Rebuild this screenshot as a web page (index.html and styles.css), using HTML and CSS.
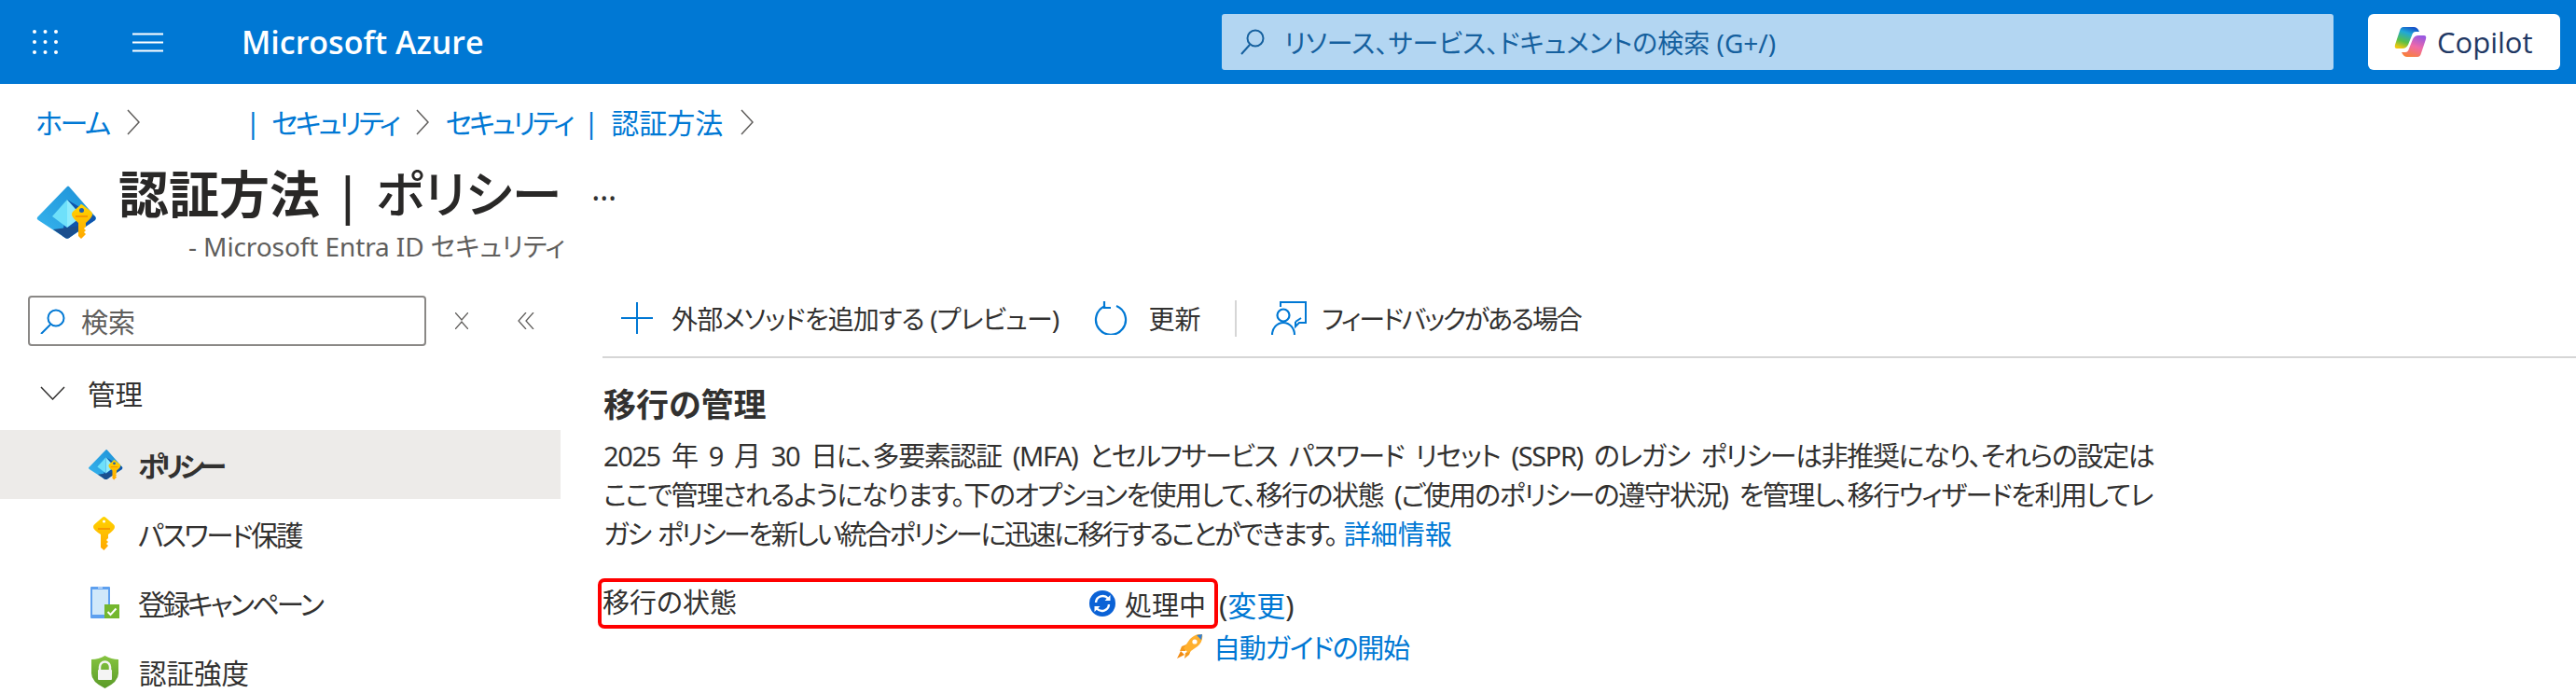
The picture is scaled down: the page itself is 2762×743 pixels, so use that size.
FILE: index.html
```html
<!DOCTYPE html>
<html lang="ja">
<head>
<meta charset="utf-8">
<title>認証方法 | ポリシー - Microsoft Azure</title>
<link rel="stylesheet" href="styles.css">
</head>
<body>
<svg class="defs" width="0" height="0" aria-hidden="true">
  <defs>
    <linearGradient id="entraL" x1="0" y1="1" x2="1" y2="0"><stop offset="0" stop-color="#37b5ee"/><stop offset="1" stop-color="#1c8fd6"/></linearGradient>
    <linearGradient id="keyG" x1="0" y1="0" x2="0" y2="1"><stop offset="0" stop-color="#ffd400"/><stop offset="1" stop-color="#ffa800"/></linearGradient>
    <linearGradient id="copL" x1="0.7" y1="0" x2="0.3" y2="1"><stop offset="0" stop-color="#1450c8"/><stop offset="0.3" stop-color="#20a8d8"/><stop offset="0.7" stop-color="#58c048"/><stop offset="1" stop-color="#f0c810"/></linearGradient>
    <linearGradient id="copR" x1="0.3" y1="1" x2="0.7" y2="0"><stop offset="0" stop-color="#9a58e0"/><stop offset="0.5" stop-color="#f06aa8"/><stop offset="1" stop-color="#f8803a"/></linearGradient>
    <linearGradient id="shieldG" x1="0" y1="0" x2="0" y2="1"><stop offset="0" stop-color="#86c440"/><stop offset="1" stop-color="#5a9a28"/></linearGradient>
    <symbol id="entra" viewBox="8 7 66 59">
      <path d="M42 9 10 42q-1 2 1 3l29 19q2 1 4 0l28-19q2-2 0-4L44 9q-1-1-2 0Z" fill="url(#entraL)"/>
      <path d="M42 23 72 41q1 2 0 4L44 64q-2 1-4 0l-3-2 5-39Z" fill="#0f55ad"/>
      <path d="M27 55 42 53 62 50 44 64q-2 1-4 0Z" fill="#1b4f8e"/>
      <path d="M42 23 26 41 42 53Z" fill="#6ee0fa"/>
      <path d="M42 23 58 41 42 53Z" fill="#8debfc"/>
      <path d="M57 28q1 0 2 1l9 7q1 1 1 3 0 3-7 9v4l-2 2 2 2-2 2 2 2-5 5-3-3V48q-7-6-7-9 0-2 1-3l8-7q0-1 1-1Z" fill="url(#keyG)"/>
      <circle cx="57.5" cy="34.500" r="2.500" fill="#1c5fb0"/>
      <path d="M51 40h13v2H51Z" fill="#f59a00"/>
    </symbol>
  </defs>
</svg>

<header class="topbar">
  <svg class="ico-grid" viewBox="0 0 27 26"><g fill="#fff"><circle cx="2" cy="2" r="2"/><circle cx="13.500" cy="2" r="2"/><circle cx="25" cy="2" r="2"/><circle cx="2" cy="13" r="2"/><circle cx="13.500" cy="13" r="2"/><circle cx="25" cy="13" r="2"/><circle cx="2" cy="24" r="2"/><circle cx="13.500" cy="24" r="2"/><circle cx="25" cy="24" r="2"/></g></svg>
  <svg class="ico-menu" viewBox="0 0 33 21"><path d="M0 1.500h33M0 10.500h33M0 19.500h33" stroke="#fff" stroke-width="2" fill="none"/></svg>
  <div class="brand">Microsoft Azure</div>
  <div class="globalsearch">
    <svg class="ico-gs" viewBox="0 0 26 28"><circle cx="16" cy="10" r="8.500" fill="none" stroke="#15609e" stroke-width="2"/><path d="M10 17 1 27" stroke="#15609e" stroke-width="2" fill="none"/></svg>
    <span>リソース、サービス、ドキュメントの検索 (G+/)</span>
  </div>
  <div class="copilot">
    <svg class="ico-cop" viewBox="0 0 35 32">
      <path d="M10 0H21Q25 0 27 5H23Q20 5 19 9L15 19Q13 23 9 23H3Q0 23 1 19L6 4Q7 0 10 0Z" fill="url(#copL)"/>
      <path d="M10 0H21Q25 0 27 5H23Q20 5 19 9L15 19Q13 23 9 23H3Q0 23 1 19L6 4Q7 0 10 0Z" fill="url(#copR)" transform="rotate(180 17.500 16)"/>
    </svg>
    <span>Copilot</span>
  </div>
</header>

<nav class="crumbs">
  <a class="link crumb-home">ホーム</a>
  <svg class="chev" viewBox="0 0 14 28"><path d="M1 1l12 13L1 27" fill="none" stroke="#605e5c" stroke-width="1.500"/></svg>
  <a class="link crumb-gap">| <span class="crumb-kana">セキュリティ</span></a>
  <svg class="chev" viewBox="0 0 14 28"><path d="M1 1l12 13L1 27" fill="none" stroke="#605e5c" stroke-width="1.500"/></svg>
  <a class="link crumb-last"><span class="crumb-kana">セキュリティ</span> | 認証方法</a>
  <svg class="chev" viewBox="0 0 14 28"><path d="M1 1l12 13L1 27" fill="none" stroke="#605e5c" stroke-width="1.500"/></svg>
</nav>

<section class="pagehead">
  <svg class="ico-title"><use href="#entra"/></svg>
  <div class="titles">
    <div class="titleline">
      <h1><b>認証方法</b> | ポリシー</h1>
      <span class="more">…</span>
    </div>
    <div class="subtitle">- Microsoft Entra ID セキュリティ</div>
  </div>
</section>

<div class="workspace">
  <aside class="sidebar">
    <div class="sidetools">
      <div class="sidesearch">
        <svg class="ico-ss" viewBox="0 0 27 27"><circle cx="17" cy="10" r="8.500" fill="none" stroke="#0078d4" stroke-width="2"/><path d="M11 17 1 27" stroke="#0078d4" stroke-width="2" fill="none"/></svg>
        <span>検索</span>
      </div>
      <svg class="ico-x" viewBox="0 0 14 18"><path d="M0 0l7 8 7-8M0 18l7-8 7 8" fill="none" stroke="#605e5c" stroke-width="1.300"/></svg>
      <svg class="ico-dbl" viewBox="0 0 18 18"><path d="M9 0 1 9l8 9M17 0 9 9l8 9" fill="none" stroke="#605e5c" stroke-width="1.300"/></svg>
    </div>
    <div class="navhead">
      <svg class="ico-down" viewBox="0 0 27 15"><path d="M1 1l12.500 13L26 1" fill="none" stroke="#323130" stroke-width="1.500"/></svg>
      <span>管理</span>
    </div>
    <ul class="nav">
      <li class="navitem selected">
        <span class="navico"><svg class="ico-nav-entra"><use href="#entra"/></svg></span>
        <span class="label-policy">ポリシー</span>
      </li>
      <li class="navitem">
        <span class="navico"><svg class="ico-key" viewBox="0 0 23 36"><path d="M11.500 0q1 0 2 1l8 7q1.500 1 1.500 3 0 3-7 8v4l-2 2 2 2-2 2 2 2-4.500 5L8 33V19q-8-5-8-8 0-2 1.500-3l8-7q1-1 2-1Z" fill="url(#keyG)"/><circle cx="11.500" cy="5" r="1.500" fill="#fff"/><path d="M5 12h13v2H5Z" fill="#f59a00"/></svg></span>
        <span class="label-pass">パスワード保護</span>
      </li>
      <li class="navitem">
        <span class="navico"><svg class="ico-phone" viewBox="0 0 31 34"><rect x="0" y="0" width="21" height="34" rx="1" fill="#5ea0ef"/><rect x="2" y="3" width="17" height="27" fill="#d0e8fa"/><path d="M8 1.200h5" stroke="#fff" stroke-width="1"/><rect x="15" y="19" width="16" height="15" fill="#74b72e"/><path d="M18.500 27l3 3 6-6.500" fill="none" stroke="#fff" stroke-width="2"/></svg></span>
        <span class="label-reg">登録キャンペーン</span>
      </li>
      <li class="navitem">
        <span class="navico"><svg class="ico-shield" viewBox="0 0 29 35"><path d="M14.500 0q7 4 14.500 4v15q0 9-14.500 16Q0 28 0 19V4q8 0 14.500-4Z" fill="url(#shieldG)"/><path d="M9 16v-4a5.500 5.500 0 0 1 11 0v4" fill="none" stroke="#f4f4f4" stroke-width="2.500"/><rect x="7" y="15" width="15" height="11" rx="1" fill="#f4f4f4"/></svg></span>
        <span class="label-str">認証強度</span>
      </li>
    </ul>
  </aside>

  <main class="content">
    <div class="toolbar">
      <div class="tool tool-add">
        <svg class="ico-plus" viewBox="0 0 34 34"><path d="M17 0v34M0 17h34" stroke="#0078d4" stroke-width="2" fill="none"/></svg>
        <span>外部メソッドを追加する (プレビュー)</span>
      </div>
      <div class="tool tool-refresh">
        <svg class="ico-refresh" viewBox="0 0 36 36"><path d="M12 5a16 16 0 1 0 12 0" fill="none" stroke="#0078d4" stroke-width="2.200"/><path d="M11 0v7h7" fill="none" stroke="#0078d4" stroke-width="2.200"/></svg>
        <span>更新</span>
      </div>
      <div class="toolsep"></div>
      <div class="tool tool-feedback">
        <svg class="ico-fb" viewBox="0 0 38 36"><path d="M10 6V1h27v22h-7l-4 4v-5" fill="none" stroke="#0078d4" stroke-width="2"/><path d="M26 22l6-4" stroke="#0078d4" stroke-width="2" fill="none"/><circle cx="13" cy="15" r="6.500" fill="none" stroke="#0078d4" stroke-width="2.200"/><path d="M1 36c0-7 5-13 12-13s12 6 12 13" fill="none" stroke="#0078d4" stroke-width="2.200"/></svg>
        <span>フィードバックがある場合</span>
      </div>
    </div>

    <article class="article">
      <h2>移行の管理</h2>
      <p class="lead">
        <span class="line line-a">2025 年 9 月 30 日に、多要素認証 (MFA) とセルフサービス パスワード リセット (SSPR) のレガシ ポリシーは非推奨になり、それらの設定は</span>
        <span class="line">ここで管理されるようになります。下のオプションを使用して、移行の状態 (ご使用のポリシーの遵守状況) を管理し、移行ウィザードを利用してレ</span>
        <span class="line line-c">ガシ ポリシーを新しい統合ポリシーに迅速に移行することができます。 <a class="link more-link">詳細情報</a></span>
      </p>
      <div class="statusrow">
        <div class="statusbox">
          <span class="statuslabel">移行の状態</span>
          <span class="statusvalue">
            <svg class="ico-sync" viewBox="0 0 28 28"><circle cx="14" cy="14" r="14" fill="#0b62d6"/><path d="M7 13a7.500 7.500 0 0 1 13-4.500M21 15a7.500 7.500 0 0 1-13 4.500" fill="none" stroke="#fff" stroke-width="2.400"/><path d="M22.500 5v6h-6zM5.500 23v-6h6z" fill="#fff"/></svg>
            処理中
          </span>
        </div>
        <span class="change">(<a class="link">変更</a>)</span>
      </div>
      <div class="guide">
        <svg class="ico-rocket" viewBox="0 0 28 26"><path d="M5 13l5-2-1 7H3ZM15 17l-2 5-5 4 1-6Z" fill="#f59a1c"/><path d="M27 0c1 5-1 10-5 13l-10 7-5-5 7-10c3-3 8-6 13-5Z" fill="#ffb02e"/><path d="M21 1l6-1-1 6Z" fill="#2f80d8"/><circle cx="19" cy="8" r="2.600" fill="#fff"/><path d="M0 26l4-8 4 4Z" fill="#f28a10"/></svg>
        <a class="link">自動ガイドの開始</a>
      </div>
    </article>
  </main>
</div>
</body>
</html>
```

FILE: styles.css
```css
* { box-sizing: border-box; }

html, body {
  margin: 0;
  height: 743px;
  overflow: hidden;
  background: #fff;
}

body {
  font-family: "Noto Sans", "Noto Sans CJK JP", sans-serif;
  font-feature-settings: "palt";
  font-size: 28px;
  color: #323130;
}

.defs { position: absolute; }

svg { display: block; flex: none; }

.link { color: #0078d4; }

/* Top bar */
.topbar {
  height: 90px;
  background: #0078d4;
  display: flex;
  align-items: center;
}
.ico-grid { width: 27px; height: 26px; margin-left: 35px; }
.ico-menu { width: 33px; height: 21px; margin-left: 80px; }
.brand {
  margin-left: 84px;
  color: #fff;
  font-family: "Open Sans", sans-serif;
  font-weight: 600;
  font-size: 34px;
  white-space: nowrap;
}
.globalsearch {
  margin-left: auto;
  width: 1192px;
  height: 60px;
  background: #b3d6f2;
  border-radius: 3px;
  display: flex;
  align-items: center;
  padding-left: 20px;
  color: #15609e;
  font-size: 28px;
  gap: 21px;
}
.ico-gs { width: 26px; height: 28px; }
.copilot {
  margin: 0 17px 0 37px;
  width: 206px;
  height: 60px;
  background: #fff;
  border-radius: 6px;
  display: flex;
  align-items: center;
  padding-left: 28px;
  gap: 11px;
  color: #1f3864;
  font-family: "Open Sans", sans-serif;
  font-weight: 500;
  font-size: 31px;
}
.ico-cop { width: 35px; height: 32px; }

/* Breadcrumb */
.crumbs {
  height: 80px;
  padding-left: 38px;
  display: flex;
  align-items: center;
  font-size: 30px;
  white-space: nowrap;
}
.crumb-home { letter-spacing: -2.300px; }
.crumb-kana { letter-spacing: -3.300px; }
.chev { width: 14px; height: 28px; margin: 2px 18px 0 19px; }
.crumb-gap { margin-left: 95px; word-spacing: 4px; }
.crumb-last { word-spacing: 5px; }

/* Page heading */
.pagehead {
  height: 130px;
  display: flex;
  align-items: flex-start;
  padding-left: 38px;
}
.ico-title { width: 66px; height: 59px; margin-top: 28px; }
.titles { margin-left: 23px; }
.titleline { display: flex; align-items: center; height: 76px; }
h1 {
  margin: 0;
  font-size: 54px;
  font-weight: 500;
  line-height: 76px;
  color: #292827;
  white-space: nowrap;
  word-spacing: 1px;
}
h1 b { font-weight: 700; }
.more { margin: 0 0 12px 32px; font-size: 34px; line-height: 1; }
.subtitle {
  height: 36px;
  line-height: 36px;
  margin-left: 75px;
  font-size: 28px;
  color: #605e5c;
  white-space: nowrap;
  letter-spacing: -0.100px;
}

/* Main area */
.workspace { display: flex; height: 443px; }

.sidebar { width: 601px; flex: none; }
.sidetools {
  padding: 17px 0 0 30px;
  display: flex;
  align-items: center;
}
.sidesearch {
  width: 427px;
  height: 54px;
  border: 2px solid #8a8886;
  border-radius: 4px;
  display: flex;
  align-items: center;
  padding-left: 11px;
  gap: 17px;
  color: #605e5c;
  font-size: 29px;
}
.ico-ss { width: 27px; height: 27px; }
.ico-x { width: 14px; height: 18px; margin-left: 31px; }
.ico-dbl { width: 18px; height: 18px; margin-left: 53px; }

.navhead {
  margin-top: 12px;
  height: 76px;
  padding-left: 43px;
  display: flex;
  align-items: center;
  gap: 24px;
  font-size: 29.500px;
}
.ico-down { width: 27px; height: 15px; }

.nav { list-style: none; margin: 2px 0 0; padding: 0; }
.navitem {
  height: 74px;
  display: flex;
  align-items: center;
  padding-left: 90px;
  font-size: 29.500px;
  white-space: nowrap;
}
.navico {
  width: 58px;
  display: flex;
  align-items: center;
  padding-left: 4px;
}
.selected { background: #edebe9; font-weight: 700; }
.label-policy { letter-spacing: -5px; }
.label-pass { letter-spacing: -2.400px; }
.label-reg { letter-spacing: -3px; }
.label-str { margin-left: 1px; }
.ico-nav-entra { width: 38px; height: 34px; }
.ico-key { width: 23px; height: 36px; margin-left: 6px; }
.ico-phone { width: 31px; height: 34px; margin-left: 3px; }
.ico-shield { width: 29px; height: 35px; margin-left: 4px; }

.content { flex: 1; min-width: 0; }

.toolbar {
  margin-left: 45px;
  height: 84px;
  border-bottom: 2px solid #d6d6d6;
  display: flex;
  align-items: center;
  padding-left: 20px;
  font-size: 28px;
  white-space: nowrap;
}
.tool { display: flex; align-items: center; }
.tool-add span { letter-spacing: -0.850px; }
.tool-feedback span { letter-spacing: -2.200px; }
.ico-plus { width: 34px; height: 34px; margin-right: 20px; }
.tool-refresh { margin-left: 38px; }
.ico-refresh { width: 36px; height: 36px; margin-right: 22px; }
.toolsep { width: 2px; height: 39px; background: #d6d6d6; margin: 0 37px; }
.ico-fb { width: 38px; height: 36px; margin-right: 16px; }

.article { padding: 30px 0 0 46px; }
h2 {
  margin: 0;
  font-size: 35px;
  font-weight: 600;
  line-height: 40px;
  color: #323130;
}
.lead {
  margin: 14px 0 0;
  font-size: 29px;
  line-height: 42px;
  white-space: nowrap;
  letter-spacing: -1.500px;
  word-spacing: 6px;
}
.line { display: block; }
.line-a { letter-spacing: -1.400px; }
.line-c { letter-spacing: -2.400px; word-spacing: 3px; }
.more-link { letter-spacing: 0; }
.statusrow {
  margin: 26px 0 0 -6px;
  display: flex;
  align-items: center;
  white-space: nowrap;
  font-size: 29px;
}
.statusbox {
  width: 665px;
  height: 54px;
  border: 4px solid #f00;
  border-radius: 7px;
  display: flex;
  justify-content: space-between;
  align-items: center;
  padding: 0 9px 0 1px;
}
.statuslabel { margin-top: -6px; }
.statusvalue { display: flex; align-items: center; gap: 10px; }
.ico-sync { width: 28px; height: 28px; }
.change { margin-left: 1px; font-size: 31px; }
.guide {
  margin: -2px 0 0 615px;
  display: flex;
  align-items: center;
  gap: 11px;
  font-size: 29px;
  white-space: nowrap;
  letter-spacing: -1.300px;
}
.ico-rocket { width: 28px; height: 26px; }
```
